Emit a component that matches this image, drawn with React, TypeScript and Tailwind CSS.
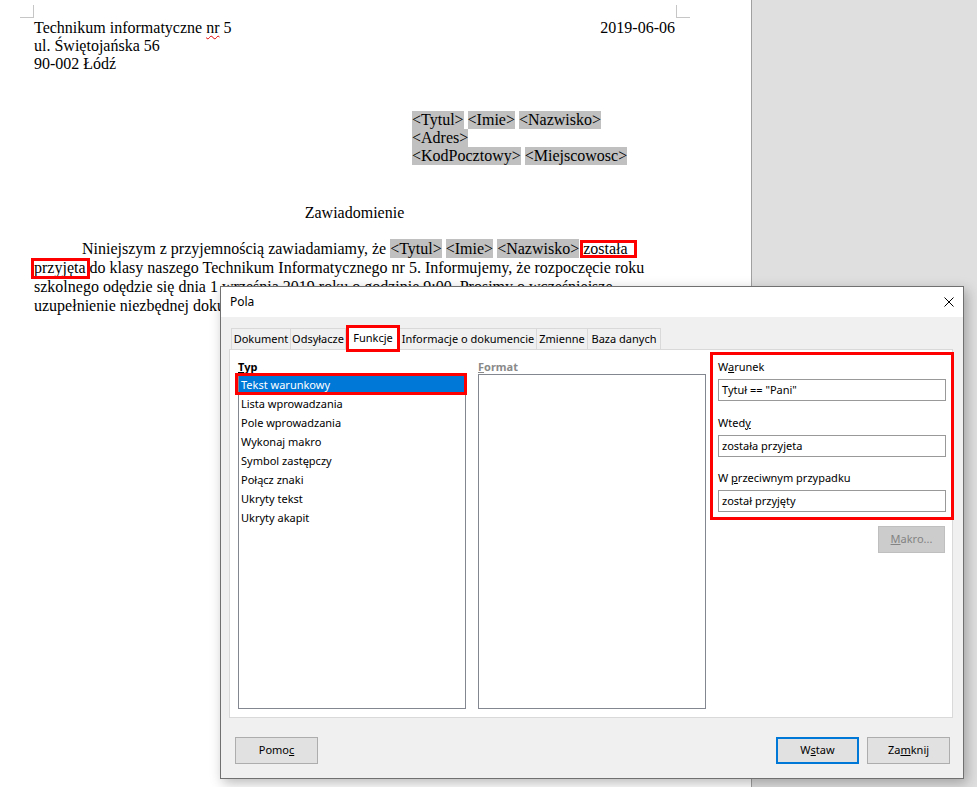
import React from "react";

const typeItems = [
  "Tekst warunkowy",
  "Lista wprowadzania",
  "Pole wprowadzania",
  "Wykonaj makro",
  "Symbol zastępczy",
  "Połącz znaki",
  "Ukryty tekst",
  "Ukryty akapit",
];

const tabs = [
  { label: "Dokument", w: "w-[60px] border-l" },
  { label: "Odsyłacze", w: "w-[55px]" },
  { label: "Funkcje", w: "w-[54px]", active: true },
  { label: "Informacje o dokumencie", w: "w-[137px]" },
  { label: "Zmienne", w: "w-[51px]" },
  { label: "Baza danych", w: "w-[73px]" },
];

function Field({ children }: { children: React.ReactNode }) {
  return <span className="inline-block bg-[#c0c0c0]">{children}</span>;
}

function RedBox({ className }: { className: string }) {
  return (
    <span
      className={
        "pointer-events-none absolute border-[3px] border-[#ff0000] " + className
      }
    />
  );
}

function Document() {
  return (
    <div className="relative h-full w-[752px] shrink-0 border-r border-[#a0a0a0] bg-white px-[34px] pt-[19px] font-['Liberation_Serif',serif] text-[16px] leading-[18px] text-black">
      {/* page corner marks */}
      <span className="absolute left-[20px] top-[5px] h-[13px] w-[14px] border-b border-r border-[#c6c6c6]" />
      <span className="absolute left-[676px] top-[5px] h-[13px] w-[14px] border-b border-l border-[#c6c6c6]" />

      <div className="w-[641px]">
        <div className="flex justify-between">
          <span>
            Technikum informatyczne{" "}
            <span className="underline decoration-[#e00000] decoration-wavy decoration-1 underline-offset-2">
              nr
            </span>{" "}
            5
          </span>
          <span>2019-06-06</span>
        </div>
        <div>ul. Świętojańska 56</div>
        <div>90-002 Łódź</div>

        <div className="ml-[378px] mt-[38px] whitespace-nowrap">
          <div>
            <Field>&lt;Tytul&gt;</Field> <Field>&lt;Imie&gt;</Field>{" "}
            <Field>&lt;Nazwisko&gt;</Field>
          </div>
          <div>
            <Field>&lt;Adres&gt;</Field>
          </div>
          <div>
            <Field>&lt;KodPocztowy&gt;</Field> <Field>&lt;Miejscowosc&gt;</Field>
          </div>
        </div>

        <div className="mt-[39px] text-center">Zawiadomienie</div>

        <div className="mt-[17px] whitespace-nowrap leading-[19px]">
          <div className="pl-[48px]">
            Niniejszym z przyjemnością zawiadamiamy, że{" "}
            <Field>&lt;Tytul&gt;</Field> <Field>&lt;Imie&gt;</Field>{" "}
            <Field>&lt;Nazwisko&gt;</Field>{" "}
            <span className="relative">
              została
              <RedBox className="-left-[3px] -right-[9px] top-0 -bottom-[1px]" />
            </span>
          </div>
          <div>
            <span className="relative">
              przyjęta
              <RedBox className="-left-[3px] -right-[4px] -top-[1px] -bottom-[3px]" />
            </span>{" "}
            do klasy naszego Technikum Informatycznego nr 5. Informujemy, że
            rozpoczęcie roku
          </div>
          <div>
            szkolnego odędzie się dnia 1 września 2019 roku o godzinie 9:00.
            Prosimy o wcześniejsze
          </div>
          <div>uzupełnienie niezbędnej dokumentacji.</div>
        </div>
      </div>
    </div>
  );
}

function Dialog() {
  return (
    <div className="absolute left-[220px] top-[286px] flex h-[493px] w-[744px] flex-col border border-[#707070] bg-[#f0f0f0] font-['Noto_Sans',sans-serif] text-[11px] text-black shadow-[3px_4px_12px_rgba(0,0,0,0.28)]">
      {/* title bar */}
      <div className="flex h-[30px] shrink-0 items-center justify-between bg-white pl-[9px] pr-[9px]">
        <span className="text-[12px]">Pola</span>
        <svg width="10" height="10" viewBox="0 0 10 10" className="text-black">
          <path d="M0.5 0.5 L9.5 9.5 M9.5 0.5 L0.5 9.5" stroke="currentColor" strokeWidth="1" />
        </svg>
      </div>

      <div className="flex flex-1 flex-col pl-[8px] pr-[9px] pt-[8px]">
        {/* tabs */}
        <div className="relative z-10 flex h-[24px] items-end pl-[2px]">
          {tabs.map((t) =>
            t.active ? (
              <div
                key={t.label}
                className={
                  "relative -mb-[1px] flex h-[25px] items-center justify-center border border-b-0 border-[#d9d9d9] bg-white " +
                  t.w
                }
              >
                {t.label}
                <RedBox className="-left-[1px] -right-[1px] -top-[1px] -bottom-[2px]" />
              </div>
            ) : (
              <div
                key={t.label}
                className={
                  "flex h-[21px] items-center justify-center border-r border-t border-[#d9d9d9] bg-[#f0f0f0] " +
                  t.w
                }
              >
                {t.label}
              </div>
            )
          )}
        </div>

        {/* tab page */}
        <div className="flex h-[369px] w-[724px] border border-[#d9d9d9] bg-white pl-[8px] pt-[9px]">
          <div className="w-[228px]">
            <div className="h-[15px] font-bold leading-[15px]">
              <span className="underline">T</span>yp
            </div>
            <div className="h-[335px] border border-[#828790] bg-white">
              {typeItems.map((item, i) =>
                i === 0 ? (
                  <div
                    key={item}
                    className="relative h-[19px] bg-[#0078d7] pl-[2px] leading-[19px] text-white"
                  >
                    {item}
                    <RedBox className="-left-[4px] -right-[2px] -top-[2px] -bottom-[1px]" />
                  </div>
                ) : (
                  <div key={item} className="h-[19px] pl-[2px] leading-[19px]">
                    {item}
                  </div>
                )
              )}
            </div>
          </div>

          <div className="ml-[12px] w-[228px]">
            <div className="h-[15px] font-bold leading-[15px] text-[#8a8a8a]">
              <span className="underline">F</span>ormat
            </div>
            <div className="h-[335px] border border-[#828790] bg-white" />
          </div>

          <div className="ml-[12px] flex w-[228px] flex-col">
            <div className="relative">
              <div className="h-[16px] leading-[16px]">
                W<span className="underline">a</span>runek
              </div>
              <div className="mt-[4px] flex h-[22px] items-center border border-[#999999] bg-white pl-[3px]">
                Tytuł == "Pani"
              </div>
              <div className="mt-[14px] h-[16px] leading-[16px]">
                Wted<span className="underline">y</span>
              </div>
              <div className="mt-[4px] flex h-[22px] items-center border border-[#999999] bg-white pl-[3px]">
                została przyjeta
              </div>
              <div className="mt-[13px] h-[16px] leading-[16px]">
                W <span className="underline">p</span>rzeciwnym przypadku
              </div>
              <div className="mt-[4px] flex h-[22px] items-center border border-[#999999] bg-white pl-[3px]">
                został przyjęty
              </div>
              <RedBox className="-left-[8px] -right-[8px] -top-[7px] -bottom-[8px]" />
            </div>
            <button className="mr-[1px] mt-[14px] flex h-[27px] w-[67px] items-center justify-center self-end border border-[#bfbfbf] bg-[#cccccc] text-[#838383]">
              <span className="underline">M</span>akro...
            </button>
          </div>
        </div>

        {/* buttons */}
        <div className="mt-[19px] flex items-center pl-[6px] pr-[4px]">
          <button className="flex h-[27px] w-[83px] items-center justify-center border border-[#adadad] bg-[#e1e1e1]">
            Pomo<span className="underline">c</span>
          </button>
          <div className="flex-1" />
          <button className="flex h-[27px] w-[83px] items-center justify-center border-2 border-[#0078d7] bg-[#e1e1e1]">
            W<span className="underline">s</span>taw
          </button>
          <button className="ml-[8px] flex h-[27px] w-[83px] items-center justify-center border border-[#adadad] bg-[#e1e1e1]">
            Za<span className="underline">m</span>knij
          </button>
        </div>
      </div>
    </div>
  );
}

export default function App() {
  return (
    <div className="relative flex h-[787px] w-[977px] overflow-hidden bg-[#dfdfdf]">
      <Document />
      <Dialog />
    </div>
  );
}
